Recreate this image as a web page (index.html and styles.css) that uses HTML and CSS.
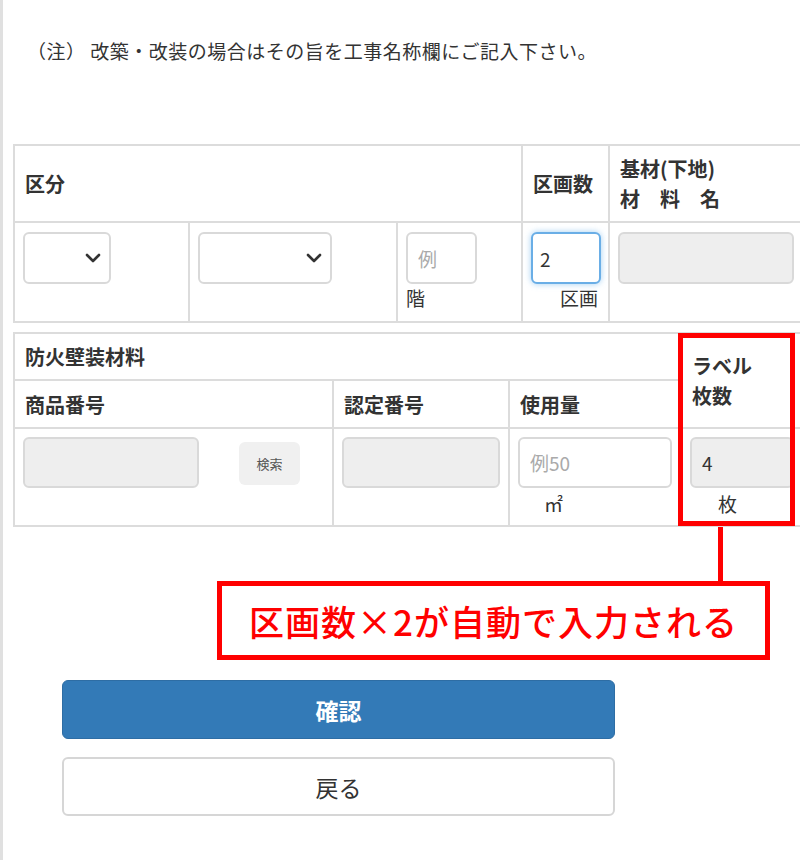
FILE: index.html
```html
<!DOCTYPE html>
<html lang="ja">
<head>
    <meta charset="utf-8">
    <title>防火壁装材料 入力</title>
    <link rel="stylesheet" href="styles.css">
</head>
<body>
    <div class="page">
        <p class="note">（注） 改築・改装の場合はその旨を工事名称欄にご記入下さい。</p>

        <div class="grid grid-kubun">
            <div class="cell head span-3">区分</div>
            <div class="cell head">区画数</div>
            <div class="cell head lines">基材(下地)<br>材　料　名</div>

            <div class="cell">
                <div class="select select-narrow">
                    <svg width="16" height="10" viewBox="0 0 16 10"><polyline points="2,2 8,8 14,2" fill="none" stroke="#333" stroke-width="2.6" stroke-linecap="round" stroke-linejoin="round"/></svg>
                </div>
            </div>
            <div class="cell">
                <div class="select select-wide">
                    <svg width="16" height="10" viewBox="0 0 16 10"><polyline points="2,2 8,8 14,2" fill="none" stroke="#333" stroke-width="2.6" stroke-linecap="round" stroke-linejoin="round"/></svg>
                </div>
            </div>
            <div class="cell">
                <input type="text" class="field field-floor" placeholder="例">
                <div class="unit">階</div>
            </div>
            <div class="cell">
                <input type="text" class="field field-count is-focus" value="2">
                <div class="unit unit-right">区画</div>
            </div>
            <div class="cell">
                <input type="text" class="field is-readonly" readonly>
            </div>
        </div>

        <div class="grid grid-material">
            <div class="cell head span-3">防火壁装材料</div>
            <div class="cell head lines label-head">ラベル<br>枚数</div>
            <div class="cell head">商品番号</div>
            <div class="cell head">認定番号</div>
            <div class="cell head">使用量</div>

            <div class="cell">
                <div class="search-row">
                    <input type="text" class="field field-product is-readonly" readonly>
                    <button type="button" class="btn-search">検索</button>
                </div>
            </div>
            <div class="cell">
                <input type="text" class="field is-readonly" readonly>
            </div>
            <div class="cell">
                <input type="text" class="field" placeholder="例50">
                <div class="unit unit-area">㎡</div>
            </div>
            <div class="cell label-cell">
                <input type="text" class="field is-readonly field-label" value="4" readonly>
                <div class="unit unit-sheet">枚</div>
            </div>

            <div class="highlight"></div>
        </div>

        <div class="callout">
            <div class="callout-line"></div>
            <div class="callout-box">区画数×2が自動で入力される</div>
        </div>

        <div class="actions">
            <button type="submit" class="btn btn-primary">確認</button>
            <button type="button" class="btn btn-back">戻る</button>
        </div>
    </div>
</body>
</html>
```

FILE: styles.css
```css
html, body {
    overflow-x: hidden;
}

body {
    margin: 0;
    font-family: "Noto Sans CJK JP", "Noto Sans", sans-serif;
    color: #333;
    background-color: white;
}

.page {
    min-height: 860px;
    box-sizing: border-box;
    border-left: 3px solid #e0e0e0;
    padding: 38px 0 0 10px;
}

.note {
    margin: 0;
    padding-left: 14px;
    font-size: 19px;
    line-height: 26px;
    letter-spacing: 0.5px;
}

/* --- tabelas (linhas feitas pelo gap) --- */
.grid {
    display: grid;
    width: 791px;
    box-sizing: border-box;
    padding: 2px;
    gap: 2px;
    background-color: #dcdcdc;
}

.grid-kubun {
    margin-top: 80px;
    grid-template-columns: 173px 206px 123px 85px 1fr;
    grid-template-rows: 75px 98px;
}

.grid-material {
    margin-top: 9px;
    grid-template-columns: 317px 174px 170px 1fr;
    grid-template-rows: 45px 46px 96px;
}

.cell {
    background-color: white;
    padding: 9px 8px;
    box-sizing: border-box;
    min-width: 0;
}

.head {
    display: flex;
    align-items: center;
    padding: 0 10px;
    font-size: 20px;
    font-weight: bold;
}

.lines {
    line-height: 30px;
}

.span-3 {
    grid-column: span 3;
}

.label-head {
    grid-column: 4;
    grid-row: 1 / 3;
}

.label-cell {
    grid-column: 4;
    grid-row: 3;
}

.grid-material .cell:not(.head) {
    padding-top: 8px;
}

/* --- campos --- */
.select {
    display: flex;
    align-items: center;
    justify-content: flex-end;
    height: 52px;
    box-sizing: border-box;
    padding-right: 8px;
    border: 2px solid #d9d9d9;
    border-radius: 6px;
}

.select-narrow {
    width: 88px;
}

.select-wide {
    width: 134px;
}

.field {
    display: block;
    width: 100%;
    height: 52px;
    box-sizing: border-box;
    padding: 0 10px;
    border: 2px solid #d9d9d9;
    border-radius: 6px;
    font-family: inherit;
    font-size: 19px;
    color: #333;
    background-color: white;
    outline: none;
}

.field::placeholder {
    color: #aaa;
}

.field-floor {
    width: 71px;
}

.field-count {
    width: 70px;
    padding-left: 7px;
}

.is-focus {
    border-color: #6aaee6;
    box-shadow: 0 0 6px rgba(102, 175, 233, 0.6);
}

.is-readonly {
    background-color: #eeeeee;
}

.field-product {
    width: 176px;
    flex: none;
}

.grid-material .field {
    height: 51px;
}

.search-row {
    display: flex;
    align-items: center;
    gap: 40px;
}

.btn-search {
    width: 61px;
    height: 43px;
    margin-top: 2px;
    border: none;
    border-radius: 6px;
    background-color: #f0f0f0;
    color: #555;
    font-family: inherit;
    font-size: 13px;
}

.unit {
    font-size: 19px;
    line-height: 24px;
    margin-top: 2px;
}

.unit-right {
    text-align: right;
    padding-right: 2px;
}

.unit-area {
    padding-left: 26px;
    margin-top: 4px;
}

.unit-sheet {
    padding-left: 28px;
    margin-top: 4px;
}

/* --- destaque vermelho --- */
.highlight {
    grid-column: 4;
    grid-row: 1 / 4;
    margin: -1px 7px -1px -4px;
    border: 5px solid #ff0000;
    pointer-events: none;
}

.callout {
    margin-left: 204px;
    width: 553px;
}

.callout-line {
    width: 5px;
    height: 54px;
    margin-left: 501px;
    background-color: #ff0000;
}

.callout-box {
    height: 79px;
    box-sizing: border-box;
    display: flex;
    align-items: center;
    justify-content: center;
    border: 5px solid #ff0000;
    color: #ff0000;
    font-size: 35px;
    font-weight: 500;
    letter-spacing: 1px;
}

/* --- botões --- */
.actions {
    display: flex;
    flex-direction: column;
    gap: 18px;
    width: 553px;
    margin: 20px 0 0 49px;
}

.btn {
    height: 59px;
    border-radius: 6px;
    font-family: inherit;
    font-size: 23px;
    cursor: pointer;
}

.btn-primary {
    border: 1px solid #2e6da4;
    background-color: #337ab7;
    color: white;
    font-weight: bold;
}

.btn-back {
    border: 2px solid #d6d6d6;
    background-color: white;
    color: #333;
}
```
